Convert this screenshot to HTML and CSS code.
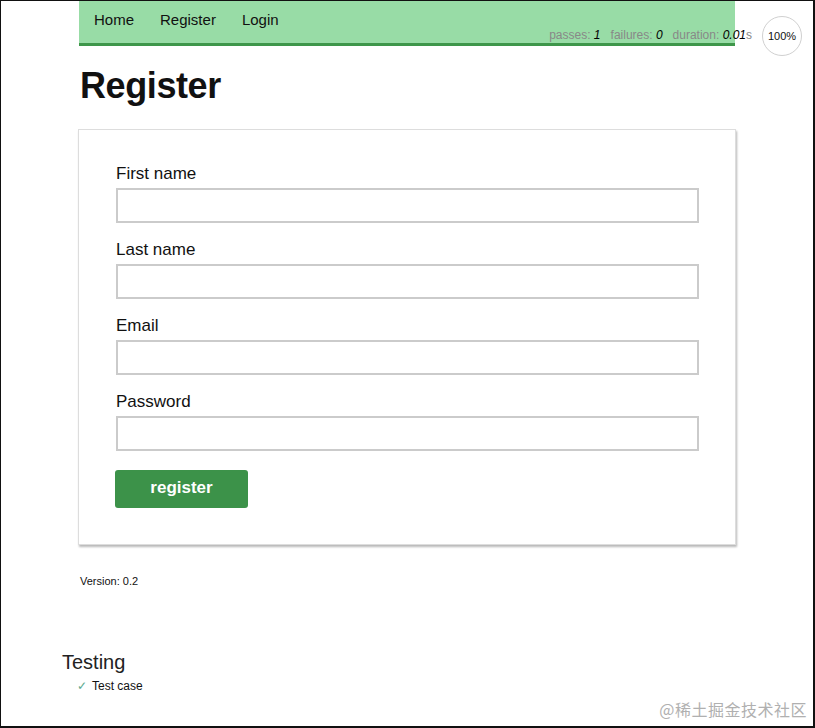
FILE: index.html
```html
<!DOCTYPE html>
<html lang="en">
<head>
<meta charset="utf-8">
<title>Register</title>
<link rel="stylesheet" href="styles.css">
</head>
<body>
<div class="frame">
  <div class="page">
    <nav class="nav">
      <a class="nav-link" href="#">Home</a>
      <a class="nav-link" href="#">Register</a>
      <a class="nav-link" href="#">Login</a>
    </nav>
    <h1 class="title">Register</h1>
    <form class="card">
      <div class="field">
        <label class="label">First name</label>
        <input class="input" type="text">
      </div>
      <div class="field">
        <label class="label">Last name</label>
        <input class="input" type="text">
      </div>
      <div class="field">
        <label class="label">Email</label>
        <input class="input" type="text">
      </div>
      <div class="field">
        <label class="label">Password</label>
        <input class="input" type="password">
      </div>
      <button class="btn" type="button">register</button>
    </form>
    <p class="version">Version: 0.2</p>
  </div>
  <div class="report">
    <h1 class="suite-title">Testing</h1>
    <div class="test"><span class="check">✓</span>Test case</div>
  </div>
  <ul class="stats">
    <li class="stat">passes: <em>1</em></li>
    <li class="stat">failures: <em>0</em></li>
    <li class="stat">duration: <em>0.01</em>s</li>
    <li class="progress">100%</li>
  </ul>
  <div class="watermark">@稀土掘金技术社区</div>
</div>
</body>
</html>
```
FILE: styles.css
```css
* { box-sizing: border-box; }
html, body { margin: 0; padding: 0; background: #fff; }
body { font-family: "Liberation Sans", Arial, Helvetica, sans-serif; color: #111; }

.frame {
  position: relative;
  width: 815px;
  height: 728px;
  border-top: 1px solid #111;
  border-left: 1px solid #111;
  border-right: 2px solid #111;
  border-bottom: 2px solid #111;
  overflow: hidden;
  background: #fff;
}

.page {
  padding-left: 77px;
  width: 735px;
}

.nav {
  margin: 0 1px;
  height: 45px;
  padding: 0 0 4px 15px;
  background: #98dca6;
  border-bottom: 3px solid #3e964a;
  display: flex;
  gap: 26px;
}
.nav-link {
  font-size: 15px;
  line-height: 38px;
  color: #111;
  text-decoration: none;
}

.title {
  margin: 20px 0 23px 2px;
  font-size: 36px;
  line-height: 40px;
  font-weight: bold;
  color: #111;
  letter-spacing: -0.4px;
}

.card {
  margin: 0;
  border: 1px solid #ddd;
  box-shadow: 1px 2px 2px rgba(0, 0, 0, 0.28);
  padding: 34px 37px 36px 37px;
  background: #fff;
  display: flex;
  flex-direction: column;
  align-items: flex-start;
}

.field {
  display: flex;
  flex-direction: column;
  width: 583px;
  margin-bottom: 17px;
}
.field:nth-of-type(4) { margin-bottom: 19px; }

.label {
  font-size: 17px;
  line-height: 20px;
  color: #111;
  margin-bottom: 4px;
}

.input {
  height: 35px;
  width: 100%;
  border: 2px solid #cbcbcb;
  background: #fff;
  margin: 0;
  padding: 0 8px;
  font: 15px "Liberation Sans", Arial, sans-serif;
}

.btn {
  margin: 0 0 0 -1px;
  width: 133px;
  height: 38px;
  border: 0;
  border-radius: 3px;
  background: #3c9249;
  color: #fff;
  font: bold 17px "Liberation Sans", Arial, sans-serif;
  padding: 0 0 2px 0;
}

.version {
  margin: 30px 0 0 2px;
  font-size: 11px;
  line-height: 13px;
  color: #111;
}

.report {
  margin: 59px 0 0 61px;
}
.suite-title {
  margin: 0;
  font-size: 20px;
  line-height: 30px;
  font-weight: normal;
  color: #222;
}
.test {
  margin-left: 15px;
  font-size: 12px;
  line-height: 18px;
  color: #111;
}
.check {
  color: #5daa8e;
  margin-right: 5px;
}

.stats {
  position: absolute;
  top: 15px;
  right: 11px;
  margin: 0;
  padding: 0;
  list-style: none;
  display: flex;
  align-items: flex-start;
  gap: 10px;
  font-size: 12px;
  color: #888;
}
.stat {
  padding-top: 12px;
  line-height: 14px;
}
.stat em { color: #000; }
.progress {
  width: 40px;
  height: 40px;
  border: 1px solid #d0d0d0;
  border-radius: 50%;
  display: flex;
  align-items: center;
  justify-content: center;
  font-size: 11px;
  color: #111;
}

.watermark {
  position: absolute;
  right: 6px;
  bottom: 5px;
  font-family: "Noto Sans CJK SC", sans-serif;
  font-size: 16px;
  color: #b0b0b0;
  letter-spacing: 0.5px;
}
```
